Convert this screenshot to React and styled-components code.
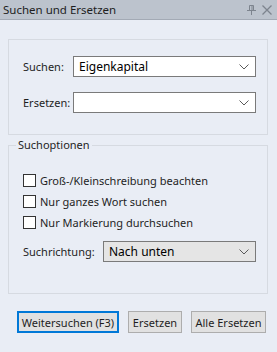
import React from 'react'
import styled, { createGlobalStyle } from 'styled-components'

const Global = createGlobalStyle`
  html, body { margin: 0; padding: 0; }
  body {
    background: #e9edf5;
    font-family: "Noto Sans", "Open Sans", sans-serif;
    font-size: 11px;
    color: #1e1e1e;
  }
`

const Chevron = () => (
  <svg width="10" height="6" viewBox="0 0 10 6">
    <path d="M0.5 0.5 L5 5 L9.5 0.5" fill="none" stroke="#5a5a5a" strokeWidth="1" />
  </svg>
)

const App = () => {
  return (
    <Wrapper>
      <Global />
      <TitleBar>
        <span>Suchen und Ersetzen</span>
        <TitleIcons>
          <svg width="9" height="10" viewBox="0 0 9 10">
            <path d="M2.5 0.5 H6.5 V5.5 H2.5 Z M0 5.5 H9 M4.5 5.5 V10" fill="none" stroke="#7d848e" strokeWidth="1" />
            <path d="M5 1 V5" stroke="#7d848e" strokeWidth="1" />
          </svg>
          <svg width="10" height="10" viewBox="0 0 10 10">
            <path d="M0.5 0.5 L9.5 9.5 M9.5 0.5 L0.5 9.5" stroke="#7d848e" strokeWidth="1.3" />
          </svg>
        </TitleIcons>
      </TitleBar>

      <Content>
        <Box>
          <FieldRow>
            <Label>Suchen:</Label>
            <Combo>
              <span>Eigenkapital</span>
              <Chevron />
            </Combo>
          </FieldRow>
          <FieldRow>
            <Label>Ersetzen:</Label>
            <Combo>
              <span></span>
              <Chevron />
            </Combo>
          </FieldRow>
        </Box>

        <Group>
          <Legend>Suchoptionen</Legend>
          <Checks>
            <CheckRow><CheckBox />Groß-/Kleinschreibung beachten</CheckRow>
            <CheckRow><CheckBox />Nur ganzes Wort suchen</CheckRow>
            <CheckRow><CheckBox />Nur Markierung durchsuchen</CheckRow>
          </Checks>
          <DirRow>
            <Label>Suchrichtung:</Label>
            <Combo $w={153} $grey>
              <span>Nach unten</span>
              <Chevron />
            </Combo>
          </DirRow>
        </Group>

        <Buttons>
          <Button $w={102} $primary>Weitersuchen (F3)</Button>
          <Button $w={54}>Ersetzen</Button>
          <Button $w={75}>Alle Ersetzen</Button>
        </Buttons>
      </Content>
    </Wrapper>
  )
}

const Wrapper = styled.main`
  width: 277px;
  height: 352px;
  overflow: hidden;
`

const TitleBar = styled.header`
  height: 19px;
  background: #bcc3cd;
  border-bottom: 1px solid #a3aab5;
  display: flex;
  align-items: center;
  justify-content: space-between;
  padding: 0 5px 0 3px;
  font-size: 11.5px;
  color: #1e1e1e;
`

const TitleIcons = styled.div`
  display: flex;
  align-items: center;
  gap: 6px;
`

const Content = styled.div`
  padding: 19px 9px 0 8px;
`

const Box = styled.section`
  height: 96px;
  box-sizing: border-box;
  border: 1px solid #d6dae1;
  padding: 16px 11px 0 14px;
  display: flex;
  flex-direction: column;
  gap: 15px;
`

const FieldRow = styled.div`
  display: flex;
  align-items: center;
`

const Label = styled.span`
  flex: 1;
  white-space: nowrap;
`

const Combo = styled.div`
  width: ${p => p.$w || 183}px;
  height: 21px;
  box-sizing: border-box;
  border: 1px solid #7a7a7a;
  background: ${p => (p.$grey ? '#e5e5e5' : '#ffffff')};
  display: flex;
  align-items: center;
  justify-content: space-between;
  padding: 0 6px 0 5px;
  color: #000;
  font-size: 12px;
`

const Group = styled.fieldset`
  margin: 2px 0 0;
  border: 1px solid #d6dae1;
  padding: 0 11px 31px 14px;
  min-width: 0;
`

const Legend = styled.legend`
  padding: 0 2px;
  margin-left: -7px;
  line-height: 16px;
`

const Checks = styled.div`
  display: flex;
  flex-direction: column;
  gap: 8px;
  padding-top: 21px;
`

const CheckRow = styled.label`
  display: flex;
  align-items: center;
  gap: 4px;
  height: 13px;
`

const CheckBox = styled.span`
  width: 13px;
  height: 13px;
  box-sizing: border-box;
  border: 1px solid #333;
  background: #fff;
`

const DirRow = styled(FieldRow)`
  margin-top: 12px;
`

const Buttons = styled.div`
  display: flex;
  gap: 9px;
  margin-top: 17px;
  padding-left: 9px;
`

const Button = styled.button`
  width: ${p => p.$w}px;
  height: 22px;
  box-sizing: border-box;
  font: inherit;
  white-space: nowrap;
  color: #1e1e1e;
  background: #e1e1e1;
  border: ${p => (p.$primary ? '2px solid #0078d7' : '1px solid #adadad')};
  padding: 0;
`

export default App
